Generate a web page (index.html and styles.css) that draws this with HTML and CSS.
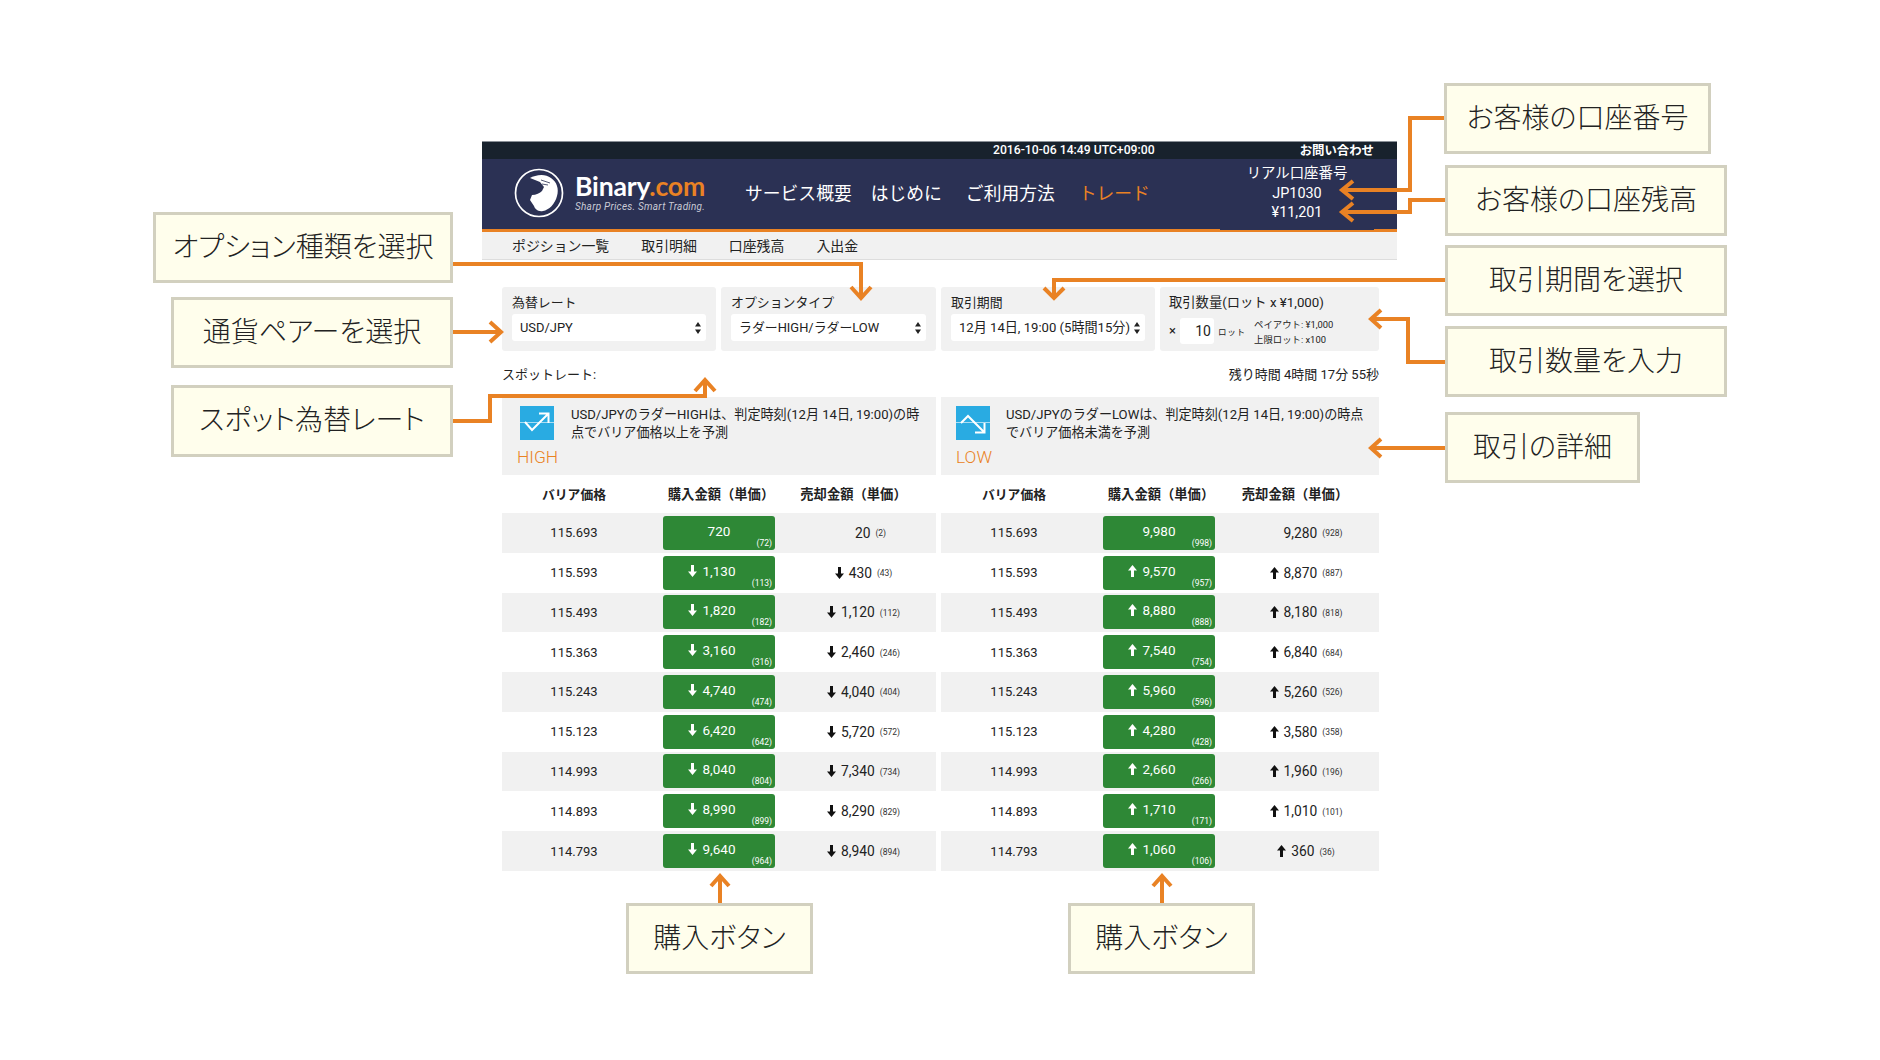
FILE: index.html
```html
<!DOCTYPE html>
<html lang="ja">
<head>
<meta charset="utf-8">
<title>Binary.com ラダー取引画面の説明</title>
<link rel="stylesheet" href="styles.css">
</head>
<body>
<svg width="0" height="0" class="defs">
  <symbol id="dn" viewBox="0 0 9 12"><path d="M3 0h3v6.5h3L4.5 12 0 6.5h3z"/></symbol>
  <symbol id="up" viewBox="0 0 9 12"><path d="M3 12h3V5.5h3L4.5 0 0 5.5h3z"/></symbol>
  <symbol id="sel" viewBox="0 0 6 12"><path d="M3 0l3 4.5H0zM3 12L0 7.5h6z"/></symbol>
</svg>

<div class="app">
  <div class="topbar"><span>2016-10-06 14:49 UTC+09:00</span><span class="contact">お問い合わせ</span></div>
  <header class="header">
    <svg class="logo" viewBox="-25 -25 50 50" width="50" height="50">
      <circle r="23.5" fill="none" stroke="#fff" stroke-width="1.7"/>
      <path fill="#fff" d="M-9-15C-4-18 6-20 12-15 18-11 20-4 18 3 16 11 10 17 4 18-1 19-4 16-5 13L-9 7-7 2C-3 2 1 0 3-2L5-6 1-11z"/>
      <path fill="none" stroke="#2b3154" stroke-width=".8" d="M2-13L11-10M3-9L9-8"/>
    </svg>
    <div class="brand">
      <div class="word">Binary<span class="dotcom">.com</span></div>
      <div class="tag">Sharp Prices. Smart Trading.</div>
    </div>
    <nav class="nav">
      <a>サービス概要</a><a>はじめに</a><a>ご利用方法</a><a class="current">トレード</a>
    </nav>
    <div class="account">リアル口座番号<br>JP1030<br>¥11,201</div>
  </header>
  <nav class="subnav"><a>ポジション一覧</a><a>取引明細</a><a>口座残高</a><a>入出金</a></nav>

  <main class="content">
    <section class="controls">
      <div class="ctl c1">
        <div class="lbl">為替レート</div>
        <div class="sel">USD/JPY<svg class="selar"><use href="#sel"/></svg></div>
      </div>
      <div class="ctl c2">
        <div class="lbl">オプションタイプ</div>
        <div class="sel">ラダーHIGH/ラダーLOW<svg class="selar"><use href="#sel"/></svg></div>
      </div>
      <div class="ctl c3">
        <div class="lbl">取引期間</div>
        <div class="sel">12月 14日, 19:00 (5時間15分)<svg class="selar"><use href="#sel"/></svg></div>
      </div>
      <div class="ctl c4">
        <div class="lbl">取引数量(ロット x ¥1,000)</div>
        <div class="qty">
          <span class="x">×</span><span class="input">10</span><span class="lot">ロット</span>
          <div class="limits">ペイアウト: ¥1,000<br>上限ロット: x100</div>
        </div>
      </div>
    </section>

    <div class="spot"><span>スポットレート:</span><span>残り時間 4時間 17分 55秒</span></div>

    <section class="panels">
      <div class="panel high">
        <div class="pmain">
          <svg class="picon" viewBox="0 0 34 34" width="34" height="34">
            <rect width="34" height="34" fill="#29abe2"/>
            <path d="M0 16.5h34" stroke="#a9dcf3" stroke-width="1"/>
            <path d="M5 16l7 8L28 8M19 7.5h9.5V17" fill="none" stroke="#fff" stroke-width="2"/>
          </svg>
          <p>USD/JPYのラダーHIGHは、判定時刻(12月 14日, 19:00)の時<br>点でバリア価格以上を予測</p>
        </div>
        <div class="ptag">HIGH</div>
      </div>
      <div class="panel low">
        <div class="pmain">
          <svg class="picon" viewBox="0 0 34 34" width="34" height="34">
            <rect width="34" height="34" fill="#29abe2"/>
            <path d="M0 16.5h34" stroke="#a9dcf3" stroke-width="1"/>
            <path d="M5 17l7-7 16 16M19 26.5h9.5V17" fill="none" stroke="#fff" stroke-width="2"/>
          </svg>
          <p>USD/JPYのラダーLOWは、判定時刻(12月 14日, 19:00)の時点<br>でバリア価格未満を予測</p>
        </div>
        <div class="ptag">LOW</div>
      </div>
    </section>

    <section class="tables">
      <div class="tbl left">
        <div class="row head"><div class="bar">バリア価格</div><div class="buyh">購入金額（単価）</div><div class="sellh">売却金額（単価）</div></div>
        <div class="row"><div class="bar">115.693</div><a class="buy"><svg class="ar none"><use href="#dn"/></svg>720<small>(72)</small></a><div class="sell"><svg class="ar none"><use href="#dn"/></svg>20<small>(2)</small></div></div>
        <div class="row"><div class="bar">115.593</div><a class="buy"><svg class="ar"><use href="#dn"/></svg>1,130<small>(113)</small></a><div class="sell"><svg class="ar"><use href="#dn"/></svg>430<small>(43)</small></div></div>
        <div class="row"><div class="bar">115.493</div><a class="buy"><svg class="ar"><use href="#dn"/></svg>1,820<small>(182)</small></a><div class="sell"><svg class="ar"><use href="#dn"/></svg>1,120<small>(112)</small></div></div>
        <div class="row"><div class="bar">115.363</div><a class="buy"><svg class="ar"><use href="#dn"/></svg>3,160<small>(316)</small></a><div class="sell"><svg class="ar"><use href="#dn"/></svg>2,460<small>(246)</small></div></div>
        <div class="row"><div class="bar">115.243</div><a class="buy"><svg class="ar"><use href="#dn"/></svg>4,740<small>(474)</small></a><div class="sell"><svg class="ar"><use href="#dn"/></svg>4,040<small>(404)</small></div></div>
        <div class="row"><div class="bar">115.123</div><a class="buy"><svg class="ar"><use href="#dn"/></svg>6,420<small>(642)</small></a><div class="sell"><svg class="ar"><use href="#dn"/></svg>5,720<small>(572)</small></div></div>
        <div class="row"><div class="bar">114.993</div><a class="buy"><svg class="ar"><use href="#dn"/></svg>8,040<small>(804)</small></a><div class="sell"><svg class="ar"><use href="#dn"/></svg>7,340<small>(734)</small></div></div>
        <div class="row"><div class="bar">114.893</div><a class="buy"><svg class="ar"><use href="#dn"/></svg>8,990<small>(899)</small></a><div class="sell"><svg class="ar"><use href="#dn"/></svg>8,290<small>(829)</small></div></div>
        <div class="row"><div class="bar">114.793</div><a class="buy"><svg class="ar"><use href="#dn"/></svg>9,640<small>(964)</small></a><div class="sell"><svg class="ar"><use href="#dn"/></svg>8,940<small>(894)</small></div></div>
      </div>
      <div class="tbl right">
        <div class="row head"><div class="bar">バリア価格</div><div class="buyh">購入金額（単価）</div><div class="sellh">売却金額（単価）</div></div>
        <div class="row"><div class="bar">115.693</div><a class="buy"><svg class="ar none"><use href="#up"/></svg>9,980<small>(998)</small></a><div class="sell"><svg class="ar none"><use href="#up"/></svg>9,280<small>(928)</small></div></div>
        <div class="row"><div class="bar">115.593</div><a class="buy"><svg class="ar"><use href="#up"/></svg>9,570<small>(957)</small></a><div class="sell"><svg class="ar"><use href="#up"/></svg>8,870<small>(887)</small></div></div>
        <div class="row"><div class="bar">115.493</div><a class="buy"><svg class="ar"><use href="#up"/></svg>8,880<small>(888)</small></a><div class="sell"><svg class="ar"><use href="#up"/></svg>8,180<small>(818)</small></div></div>
        <div class="row"><div class="bar">115.363</div><a class="buy"><svg class="ar"><use href="#up"/></svg>7,540<small>(754)</small></a><div class="sell"><svg class="ar"><use href="#up"/></svg>6,840<small>(684)</small></div></div>
        <div class="row"><div class="bar">115.243</div><a class="buy"><svg class="ar"><use href="#up"/></svg>5,960<small>(596)</small></a><div class="sell"><svg class="ar"><use href="#up"/></svg>5,260<small>(526)</small></div></div>
        <div class="row"><div class="bar">115.123</div><a class="buy"><svg class="ar"><use href="#up"/></svg>4,280<small>(428)</small></a><div class="sell"><svg class="ar"><use href="#up"/></svg>3,580<small>(358)</small></div></div>
        <div class="row"><div class="bar">114.993</div><a class="buy"><svg class="ar"><use href="#up"/></svg>2,660<small>(266)</small></a><div class="sell"><svg class="ar"><use href="#up"/></svg>1,960<small>(196)</small></div></div>
        <div class="row"><div class="bar">114.893</div><a class="buy"><svg class="ar"><use href="#up"/></svg>1,710<small>(171)</small></a><div class="sell"><svg class="ar"><use href="#up"/></svg>1,010<small>(101)</small></div></div>
        <div class="row"><div class="bar">114.793</div><a class="buy"><svg class="ar"><use href="#up"/></svg>1,060<small>(106)</small></a><div class="sell"><svg class="ar"><use href="#up"/></svg>360<small>(36)</small></div></div>
      </div>
    </section>
  </main>
</div>

<svg class="arrows" viewBox="0 0 1880 1060" width="1880" height="1060">
  <path d="M1445 118H1410V190H1343"/><path d="M1353 181L1342 190L1353 199"/>
  <path d="M1445 200H1410V212H1343"/><path d="M1353 203L1342 212L1353 221"/>
  <path d="M1445 280H1054V297"/><path d="M1044 288L1054 298L1064 288"/>
  <path d="M1445 362H1408V319H1372"/><path d="M1381 310L1371 319L1381 328"/>
  <path d="M1445 448H1372"/><path d="M1381 439L1371 448L1381 457"/>
  <path d="M452 264H861V297"/><path d="M851 287L861 298L871 287"/>
  <path d="M452 332H500"/><path d="M490 322L501 332L490 342"/>
  <path d="M452 421H490V396H705V381"/><path d="M695 391L705 380L715 391"/>
  <path d="M720 903V877"/><path d="M711 886L720 876L729 886"/>
  <path d="M1162 903V877"/><path d="M1153 886L1162 876L1171 886"/>
</svg>

<div class="note n-account">お客様の口座番号</div>
<div class="note n-balance">お客様の口座残高</div>
<div class="note n-period">取引期間を選択</div>
<div class="note n-amount">取引数量を入力</div>
<div class="note n-detail">取引の詳細</div>
<div class="note n-option">オプション種類を選択</div>
<div class="note n-pair">通貨ペアーを選択</div>
<div class="note n-spot">スポット為替レート</div>
<div class="note n-buy1">購入ボタン</div>
<div class="note n-buy2">購入ボタン</div>
</body>
</html>
```
FILE: styles.css
```css
* { box-sizing: border-box; }
html, body { margin: 0; padding: 0; background: #fff; }
body {
  position: relative;
  width: 1880px;
  height: 1060px;
  overflow: hidden;
  font-family: Roboto, "Noto Sans CJK JP", sans-serif;
  color: #222;
  padding: 141px 0 0 482px;
}
.defs { position: absolute; }
.app { width: 915px; }

.topbar {
  height: 18px;
  background: #18222d;
  border-top: 1px solid #8a9097;
  color: #fff;
  font-size: 12.2px;
  font-weight: 500;
  line-height: 17px;
  display: flex;
  padding: 0 23px 0 511px;
  justify-content: space-between;
}
.contact { font-weight: 700; font-size: 12.4px; }

.header {
  height: 73px;
  background: #2b3154;
  border-bottom: 3px solid #e98224;
  display: flex;
  align-items: center;
  padding-left: 32px;
  color: #fff;
  position: relative;
}
.logo { flex: none; margin-top: -3px; }
.brand { margin: -3px 0 0 11px; width: 128px; }
.word { font: 700 26.6px/27px Lato, sans-serif; letter-spacing: -.2px; }
.dotcom { color: #e98224; }
.tag { font: italic 400 10px/13px Roboto, sans-serif; color: #c9cbd6; letter-spacing: .25px; white-space: nowrap; }
.nav { display: flex; gap: 24px; margin-left: 42px; font-size: 17.8px; line-height: 24px; margin-top: -1px; }
.nav a:first-child { margin-right: -5px; }
.current { color: #e98224; }
.account {
  position: absolute;
  left: 738px;
  top: 0;
  width: 154px;
  height: 71px;
  padding-top: 5px;
  background: #2b3154;
  text-align: center;
  font-size: 14.4px;
  font-weight: 400;
  line-height: 19.5px;
}

.subnav {
  height: 28px;
  background: #f1f1f1;
  border-bottom: 1px solid #ddd;
  display: flex;
  gap: 32px;
  padding-left: 30px;
  font-size: 13.9px;
  line-height: 29px;
}

.content { width: 877px; margin: 27px 0 0 20px; }

.controls { display: flex; gap: 5px; height: 64px; }
.ctl { background: #f1f1f1; border-radius: 3px; padding: 6px 10px 0; font-size: 12.9px; }
.c1 { width: 214px; }
.c2 { width: 215px; }
.c3 { width: 214px; }
.c3 .sel { font-size: 13.1px; }
.c4 { width: 219px; padding-left: 9px; }
.c4 .lbl { font-size: 13.3px; }
.lbl { line-height: 20px; white-space: nowrap; }
.sel {
  height: 27px;
  margin-top: 1px;
  background: #fff;
  border-radius: 3px;
  padding-left: 8px;
  line-height: 27px;
  display: flex;
  justify-content: space-between;
  align-items: center;
  padding-right: 5px;
  white-space: nowrap;
}
.selar { width: 6px; height: 12px; fill: #222; }
.qty { display: flex; align-items: center; margin-top: 1px; }
.x { width: 11px; font-size: 13px; }
.input {
  width: 34px;
  height: 26px;
  background: #fff;
  border-radius: 3px;
  text-align: right;
  padding-right: 3px;
  line-height: 26px;
  font-size: 14px;
}
.lot { font-size: 8.5px; margin-left: 4px; width: 36px; letter-spacing: .8px; }
.limits { font-size: 9.4px; line-height: 15px; white-space: nowrap; padding-top: 3px; }

.spot {
  height: 46px;
  display: flex;
  justify-content: space-between;
  align-items: center;
  font-size: 13px;
  padding-bottom: 2px;
}

.panels { display: flex; gap: 5px; height: 78px; }
.panel { background: #f1f1f1; padding-top: 9px; }
.high { width: 434px; padding-left: 18px; }
.low { width: 438px; padding-left: 15px; }
.pmain { display: flex; gap: 17px; }
.low .pmain { gap: 16px; }
.picon { flex: none; }
.panel p { margin: 0; font-size: 13.1px; line-height: 17.5px; white-space: nowrap; }
.ptag { margin-top: 6px; font-size: 17.4px; line-height: 20px; font-weight: 300; color: #e98224; }
.high .ptag { margin-left: -3px; }

.tables { display: flex; gap: 5px; }
.tbl { display: grid; row-gap: 0; }
.left { width: 434px; }
.right { width: 438px; }
.row { height: 39.78px; display: grid; align-items: center; font-size: 13px; }
.left .row { grid-template-columns: 161px 112px 1fr; }
.right .row { grid-template-columns: 162px 112px 1fr; }
.row:nth-child(even) { background: #f1f1f1; }
.row.head { height: 38px; background: #fff; font-weight: 700; font-size: 13.3px; padding-bottom: 1px; }
.bar { text-align: center; padding-right: 17px; }
.right .bar { padding-right: 16px; }
.buyh { text-align: center; white-space: nowrap; margin-left: 4px; }
.sellh { text-align: center; padding-right: 4px; white-space: nowrap; }
.head .bar { font-size: 12.8px; }
.buy {
  position: relative;
  height: 34px;
  background: #2e8836;
  border-radius: 3px;
  color: #fff;
  display: flex;
  justify-content: center;
  align-items: center;
  padding: 0 14px 4px 0;
  font-size: 13.5px;
}
.buy small {
  position: absolute;
  right: 3px;
  bottom: 1px;
  font-size: 8.5px;
  line-height: 11px;
}
.buy .ar { fill: #fff; }
.ar { width: 9px; height: 12px; margin-right: 5px; fill: #111; flex: none; }
.ar.none { visibility: hidden; }
.sell {
  display: flex;
  justify-content: center;
  align-items: center;
  padding-left: 16px;
  font-size: 13.8px;
}
.right .sell { padding-left: 18px; }
.sell small { font-size: 8.5px; margin-left: 5px; color: #333; padding-top: 1px; }

.arrows { position: absolute; left: 0; top: 0; fill: none; stroke: #e98224; stroke-width: 4; pointer-events: none; }

.note {
  position: absolute;
  display: flex;
  align-items: center;
  justify-content: center;
  background: #fffeec;
  border: 3px solid #d2d0bf;
  color: #222;
  font-family: "Noto Sans CJK JP", sans-serif;
  font-feature-settings: "palt";
  font-weight: 300;
  font-size: 28px;
  padding-bottom: 6px;
  white-space: nowrap;
}
.n-account { left: 1444px; top: 83px; width: 267px; height: 71px; }
.n-balance { left: 1445px; top: 165px; width: 282px; height: 71px; }
.n-period { left: 1445px; top: 245px; width: 282px; height: 71px; }
.n-amount { left: 1445px; top: 326px; width: 282px; height: 71px; }
.n-detail { left: 1445px; top: 412px; width: 195px; height: 71px; }
.n-option { left: 153px; top: 212px; width: 300px; height: 71px; }
.n-pair { left: 171px; top: 297px; width: 282px; height: 71px; }
.n-spot { left: 171px; top: 385px; width: 282px; height: 72px; }
.n-buy1 { left: 626px; top: 903px; width: 187px; height: 71px; }
.n-buy2 { left: 1068px; top: 903px; width: 187px; height: 71px; }
```
